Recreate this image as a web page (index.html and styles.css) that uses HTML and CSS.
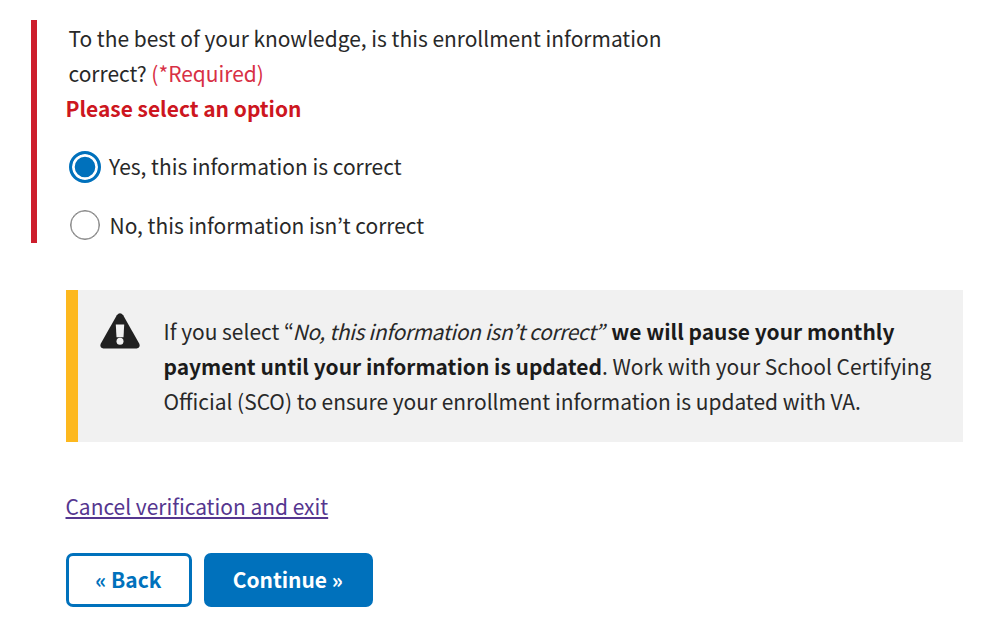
FILE: index.html
```
<!DOCTYPE html>
<html lang="en">
<head>
<meta charset="utf-8">
<title>Verify enrollment</title>
<link rel="stylesheet" href="styles.css">
</head>
<body>
<main class="page">
  <fieldset class="question">
    <p class="legend">To the best of your knowledge, is this enrollment information<br>correct? <span class="required">(*Required)</span></p>
    <p class="error">Please select an option</p>
    <label class="option option-yes"><span class="radio checked"></span><span class="label">Yes, this information is correct</span></label>
    <label class="option option-no"><span class="radio"></span><span class="label">No, this information isn’t correct</span></label>
  </fieldset>
  <section class="alert">
    <svg class="warning" viewBox="0 0 40 36" width="40" height="36" aria-hidden="true">
      <path fill="#212121" d="M16.8 2.2Q20 -1.9 23.2 2.2L39.3 30.7Q40.6 35 36.7 35.5H3.3Q-.6 35 .7 30.7Z"/>
      <path fill="#f1f1f1" d="M15.8 11.5h8.4l-.7 12.8h-7Z"/>
      <circle fill="#f1f1f1" cx="20" cy="28.3" r="3.5"/>
    </svg>
    <p class="alert-text">If you select “<em>No, this information isn’t correct<span class="close-quote">”</span></em> <b>we will pause your monthly</b><br><b>payment until your information is updated</b>. Work with your School Certifying<br>Official (SCO) to ensure your enrollment information is updated with VA.</p>
  </section>
  <a class="cancel" href="#">Cancel verification and exit</a>
  <div class="actions">
    <button class="button secondary">« Back</button>
    <button class="button primary">Continue »</button>
  </div>
</main>
</body>
</html>
```
FILE: styles.css
```
* { box-sizing: border-box; }
body {
  margin: 0;
  background: #fff;
  color: #282828;
  font: 20.95px/35px "Noto Sans CJK KR", "Noto Sans", sans-serif;
}
.page { display: flex; flex-direction: column; align-items: flex-start; width: 1000px; height: 627px; padding: 20px 37px 0 31px; white-space: nowrap; }
.question { width: 640px; height: 223px; margin: 0; padding: 1px 0 0 28.5px; border: 0; border-left: 6px solid #cd1e2c; }
.legend { margin: 0 0 0 3px; }
.required { color: #d83045; }
.error { margin: 0; color: #cd1620; font-weight: 700; }
.option { display: flex; align-items: center; height: 35px; }
.option-yes { margin: 23px 0 23px 3.5px; gap: 8px; }
.option-no { margin-left: 4.5px; gap: 9.5px; }
.option-no .label { padding-top: 1px; }
.radio { width: 30px; height: 30px; border: 1px solid #858585; border-radius: 50%; box-shadow: inset 0 0 0 .5px #858585; }
.radio.checked { width: 32px; height: 32px; border: 3px solid #0071bc; background: #0071bc; box-shadow: inset 0 0 0 2.7px #fff; }
.alert { display: flex; gap: 23.5px; width: 897px; height: 152px; margin: 47px 0 0 35px; padding: 23px 0 0 22px; border-left: 12px solid #fdb81e; background: #f1f1f1; }
.alert b { color: #1b1b1b; }
.alert em { margin-left: -1.5px; letter-spacing: -.34px; }
.close-quote { margin: 0 2.5px 0 -1px; }
.warning { flex: none; }
.alert-text { margin: 1px 0 0; }
.cancel { margin: 47px 0 0 34.5px; color: #55368f; text-decoration-thickness: 1.5px; text-underline-offset: 2px; }
.actions { display: flex; gap: 12px; margin: 29px 0 0 35px; }
.button { height: 54px; padding: 0 1px 1px 0; border: 3px solid #0071bc; border-radius: 7px; font: inherit; font-weight: 700; }
.secondary { width: 125.5px; background: #fff; color: #0071bc; }
.primary { width: 169.5px; background: #0071bc; color: #fff; }
```
